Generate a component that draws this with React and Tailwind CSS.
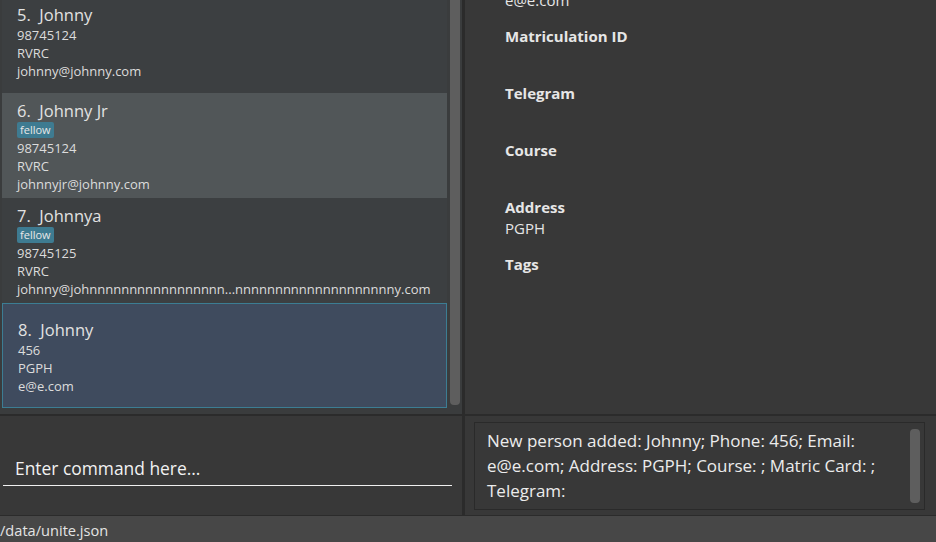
const people = [
  { n: 5, name: 'Johnny', phone: '98745124', addr: 'RVRC', email: 'johnny@johnny.com' },
  { n: 6, name: 'Johnny Jr', tag: 'fellow', phone: '98745124', addr: 'RVRC', email: 'johnnyjr@johnny.com' },
  { n: 7, name: 'Johnnya', tag: 'fellow', phone: '98745125', addr: 'RVRC', email: 'johnny@johnnnnnnnnnnnnnnnnn...nnnnnnnnnnnnnnnnnnnny.com' },
  { n: 8, name: 'Johnny', phone: '456', addr: 'PGPH', email: 'e@e.com', selected: true },
]

function PersonCard({ p, i }) {
  let cls = 'bg-[#3c3f41]'
  if (i % 2 === 1) cls = 'bg-[#515658]'
  if (p.selected) cls = 'bg-[#3f4b5e] border border-[#3c7d93]'
  return (
    <div className={`h-[105px] flex flex-col justify-center pl-[15px] pt-[2px] ${cls}`}>
      <div className="text-[16.5px] leading-[22px] text-[#e2e2e2] whitespace-pre">{p.n}.  {p.name}</div>
      {p.tag && (
        <div className="flex mb-[1px]">
          <span className="bg-[#3e7b91] text-[#e8e8e8] text-[11px] leading-[16px] px-[3px] rounded-[2px]">{p.tag}</span>
        </div>
      )}
      <div className="text-[13px] leading-[18px] text-[#dcdcdc]">{p.phone}</div>
      <div className="text-[13px] leading-[18px] text-[#dcdcdc]">{p.addr}</div>
      <div className="text-[13px] leading-[18px] text-[#dcdcdc] whitespace-nowrap">{p.email}</div>
    </div>
  )
}

function Field({ label }) {
  return (
    <div className="h-[57px]">
      <div className="text-[15px] leading-[20px] font-bold text-[#e6e6e6]">{label}</div>
    </div>
  )
}

export default function App() {
  return (
    <div className="w-[936px] h-[542px] flex flex-col bg-[#383838] overflow-hidden" style={{ fontFamily: '"Open Sans", "Noto Sans", sans-serif' }}>
      <div className="h-[414px] shrink-0 flex overflow-hidden">
        <div className="w-[462px] flex bg-[#3a3c3d]">
          <div className="w-[445px] ml-[2px] overflow-hidden">
            <div className="-mt-[12px]">
              {people.map((p, i) => <PersonCard key={p.n} p={p} i={i} />)}
            </div>
          </div>
          <div className="w-[3px]" />
          <div className="w-[10px] h-[405px] bg-[#5e5e5e] rounded-b-[4px]" />
        </div>
        <div className="w-[3px] bg-[#2b2b2b]" />
        <div className="flex-1 bg-[#383838] pl-[40px] -mt-[10px]">
          <div className="text-[15px] leading-[20px] text-[#e6e6e6] h-[36px]">e@e.com</div>
          <Field label="Matriculation ID" />
          <Field label="Telegram" />
          <Field label="Course" />
          <div className="h-[57px]">
            <div className="text-[15px] leading-[20px] font-bold text-[#e6e6e6]">Address</div>
            <div className="text-[15px] leading-[22px] text-[#e6e6e6]">PGPH</div>
          </div>
          <Field label="Tags" />
        </div>
      </div>
      <div className="h-[2px] shrink-0 bg-[#2b2b2b]" />
      <div className="h-[99px] shrink-0 flex">
        <div className="w-[462px] flex flex-col justify-end pb-[29px]">
          <div className="ml-[3px] w-[449px] border-b border-[#f0f0f0] pl-[12px] pb-[5px] text-[17.4px] leading-[24px] text-[#f2f2f2]">Enter command here...</div>
        </div>
        <div className="w-[3px] bg-[#2b2b2b]" />
        <div className="flex-1 pl-[9px] pr-[11px] pt-[6px] pb-[4px]">
          <div className="h-[88px] border border-[#2a2a2a] flex">
            <div className="flex-1 pl-[12px] pr-[8px] pt-[5px] text-[17px] leading-[25px] text-[#ececec]">
              New person added: Johnny; Phone: 456; Email: e@e.com; Address: PGPH; Course: ; Matric Card: ; Telegram:
            </div>
            <div className="w-[10px] mr-[4px] mt-[6px] mb-[6px] bg-[#5e5e5e] rounded-[4px]" />
          </div>
        </div>
      </div>
      <div className="h-[1px] shrink-0 bg-[#2b2b2b]" />
      <div className="flex-1 bg-[#474747] text-[14.6px] leading-[28px] text-[#e4e4e4]">/data/unite.json</div>
    </div>
  )
}
